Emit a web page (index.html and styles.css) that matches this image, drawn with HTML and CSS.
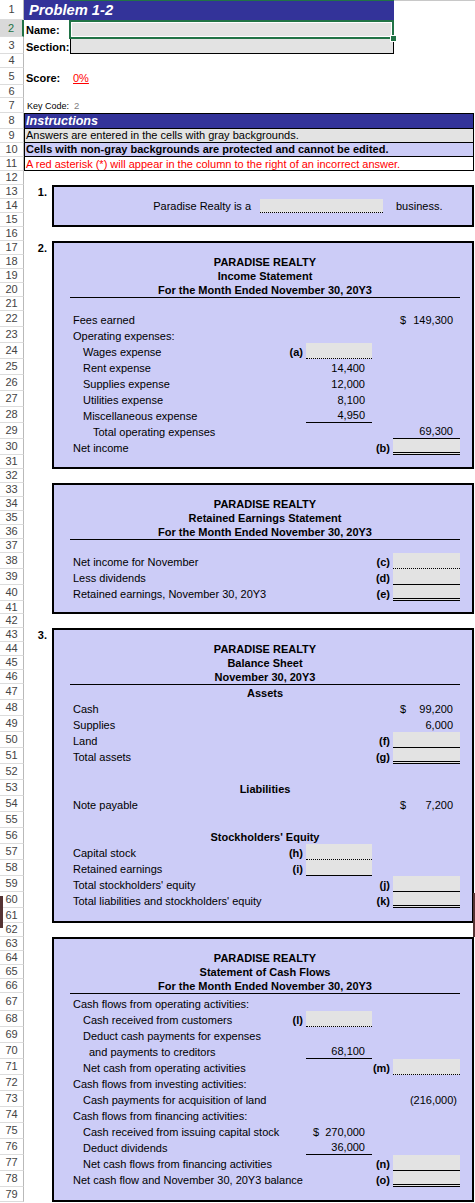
FILE: index.html
```html
<!DOCTYPE html>
<html>
<head>
<meta charset="utf-8">
<link rel="stylesheet" href="styles.css">
</head>
<body>
<div class="sheet">
  <div class="rowhdr">
    <div class="rh h20">1</div><div class="rh h17 on">2</div><div class="rh h17">3</div><div class="rh h14">4</div><div class="rh h17">5</div><div class="rh h13">6</div><div class="rh h15">7</div><div class="rh h16">8</div>
    <div class="rh h14">9</div><div class="rh h14">10</div><div class="rh h14">11</div><div class="rh h14">12</div><div class="rh h14">13</div><div class="rh h14">14</div><div class="rh h14">15</div><div class="rh h14">16</div><div class="rh h14">17</div><div class="rh h14">18</div><div class="rh h14">19</div><div class="rh h14">20</div><div class="rh h14">21</div>
    <div class="rh h16">22</div><div class="rh h16">23</div><div class="rh h16">24</div><div class="rh h16">25</div><div class="rh h16">26</div><div class="rh h16">27</div><div class="rh h16">28</div><div class="rh h16">29</div><div class="rh h16">30</div>
    <div class="rh h14">31</div><div class="rh h14">32</div><div class="rh h14">33</div><div class="rh h14">34</div><div class="rh h14">35</div><div class="rh h14">36</div><div class="rh h14">37</div>
    <div class="rh h16">38</div><div class="rh h16">39</div><div class="rh h16">40</div><div class="rh h13">41</div>
    <div class="rh h14">42</div><div class="rh h14">43</div><div class="rh h14">44</div><div class="rh h14">45</div><div class="rh h14">46</div>
    <div class="rh h16">47</div><div class="rh h16">48</div><div class="rh h16">49</div><div class="rh h16">50</div><div class="rh h16">51</div><div class="rh h16">52</div><div class="rh h16">53</div><div class="rh h16">54</div><div class="rh h16">55</div><div class="rh h16">56</div><div class="rh h16">57</div><div class="rh h16">58</div><div class="rh h16">59</div><div class="rh h16">60</div>
    <div class="rh h15">61</div>
    <div class="rh h14">62</div><div class="rh h14">63</div><div class="rh h14">64</div><div class="rh h14">65</div><div class="rh h14">66</div>
    <div class="rh h18">67</div>
    <div class="rh h16">68</div><div class="rh h16">69</div><div class="rh h16">70</div><div class="rh h16">71</div><div class="rh h16">72</div><div class="rh h16">73</div><div class="rh h16">74</div><div class="rh h16">75</div><div class="rh h16">76</div><div class="rh h16">77</div><div class="rh h16">78</div>
    <div class="rh h15">79</div>
  </div>

  <div class="cells">
    <div class="r h20"><div class="title">Problem 1-2</div></div>
    <div class="r h17"><div class="lab">Name:</div><div class="namebox"></div></div>
    <div class="r h17"><div class="lab">Section:</div><div class="secbox"></div></div>
    <div class="r h14"></div>
    <div class="r h17"><div class="lab">Score:</div><div class="pct">0%</div></div>
    <div class="r h13"></div>
    <div class="r h15"><div class="lab kc">Key Code:</div><div class="kv">2</div></div>

    <div class="instr">
      <div class="ir h16 ib">Instructions</div>
      <div class="ir h14 ig">Answers are entered in the cells with gray backgrounds.</div>
      <div class="ir h14 il">Cells with non-gray backgrounds are protected and cannot be edited.</div>
      <div class="ir h14 iw">A red asterisk (*) will appear in the column to the right of an incorrect answer.</div>
    </div>
    <div class="r h14"></div>

    <!-- 1 -->
    <div class="q">
      <div class="qn">1.</div>
      <div class="box">
        <div class="b1 h14"></div>
        <div class="b1 h14"><div class="c rt">Paradise Realty is a</div><div class="c g ud"></div><div class="c bz">business.</div></div>
        <div class="b1 h14"></div>
      </div>
    </div>
    <div class="r h14"></div>

    <!-- 2 -->
    <div class="q">
      <div class="qn">2.</div>
      <div class="box">
        <div class="sr h14"></div>
        <div class="sr h14"><div class="c hd">PARADISE REALTY</div></div>
        <div class="sr h14"><div class="c hd">Income Statement</div></div>
        <div class="sr h14"><div class="c hd ul">For the Month Ended November 30, 20Y3</div></div>
        <div class="sr h14"></div>
        <div class="sr h16"><div class="c lb"><span>Fees earned</span></div><div class="c a1"></div><div class="c t2"></div><div class="c a2 dl"><span>$</span><span>149,300</span></div></div>
        <div class="sr h16"><div class="c lb"><span>Operating expenses:</span></div><div class="c a1"></div><div class="c t2"></div><div class="c a2"></div></div>
        <div class="sr h16"><div class="c lb"><span class="i1">Wages expense</span><span class="tg">(a)</span></div><div class="c a1 g ud"></div><div class="c t2"></div><div class="c a2"></div></div>
        <div class="sr h16"><div class="c lb"><span class="i1">Rent expense</span></div><div class="c a1">14,400</div><div class="c t2"></div><div class="c a2"></div></div>
        <div class="sr h16"><div class="c lb"><span class="i1">Supplies expense</span></div><div class="c a1">12,000</div><div class="c t2"></div><div class="c a2"></div></div>
        <div class="sr h16"><div class="c lb"><span class="i1">Utilities expense</span></div><div class="c a1">8,100</div><div class="c t2"></div><div class="c a2"></div></div>
        <div class="sr h16"><div class="c lb"><span class="i1">Miscellaneous expense</span></div><div class="c a1 u1">4,950</div><div class="c t2"></div><div class="c a2"></div></div>
        <div class="sr h16"><div class="c lb"><span class="i2">Total operating expenses</span></div><div class="c a1"></div><div class="c t2"></div><div class="c a2 u1">69,300</div></div>
        <div class="sr h16"><div class="c lb"><span>Net income</span></div><div class="c a1"></div><div class="c t2">(b)</div><div class="c a2 g u2"></div></div>
        <div class="sr h14"></div>
      </div>
    </div>
    <div class="r h14"></div>

    <!-- retained earnings -->
    <div class="q">
      <div class="qn"></div>
      <div class="box">
        <div class="sr h14"></div>
        <div class="sr h14"><div class="c hd">PARADISE REALTY</div></div>
        <div class="sr h14"><div class="c hd">Retained Earnings Statement</div></div>
        <div class="sr h14"><div class="c hd ul">For the Month Ended November 30, 20Y3</div></div>
        <div class="sr h14"></div>
        <div class="sr h16"><div class="c lb"><span>Net income for November</span></div><div class="c a1"></div><div class="c t2">(c)</div><div class="c a2 g ud"></div></div>
        <div class="sr h16"><div class="c lb"><span>Less dividends</span></div><div class="c a1"></div><div class="c t2">(d)</div><div class="c a2 g u1"></div></div>
        <div class="sr h16"><div class="c lb"><span>Retained earnings, November 30, 20Y3</span></div><div class="c a1"></div><div class="c t2">(e)</div><div class="c a2 g u2"></div></div>
        <div class="sr h13"></div>
      </div>
    </div>
    <div class="r h14"></div>

    <!-- 3 balance sheet -->
    <div class="q">
      <div class="qn">3.</div>
      <div class="box">
        <div class="sr h14"></div>
        <div class="sr h14"><div class="c hd">PARADISE REALTY</div></div>
        <div class="sr h14"><div class="c hd">Balance Sheet</div></div>
        <div class="sr h14"><div class="c hd ul">November 30, 20Y3</div></div>
        <div class="sr h16"><div class="c hd">Assets</div></div>
        <div class="sr h16"><div class="c lb"><span>Cash</span></div><div class="c a1"></div><div class="c t2"></div><div class="c a2 dl"><span>$</span><span>99,200</span></div></div>
        <div class="sr h16"><div class="c lb"><span>Supplies</span></div><div class="c a1"></div><div class="c t2"></div><div class="c a2">6,000</div></div>
        <div class="sr h16"><div class="c lb"><span>Land</span></div><div class="c a1"></div><div class="c t2">(f)</div><div class="c a2 g u1"></div></div>
        <div class="sr h16"><div class="c lb"><span>Total assets</span></div><div class="c a1"></div><div class="c t2">(g)</div><div class="c a2 g u2"></div></div>
        <div class="sr h16"></div>
        <div class="sr h16"><div class="c hd">Liabilities</div></div>
        <div class="sr h16"><div class="c lb"><span>Note payable</span></div><div class="c a1"></div><div class="c t2"></div><div class="c a2 dl"><span>$</span><span>7,200</span></div></div>
        <div class="sr h16"></div>
        <div class="sr h16"><div class="c hd">Stockholders' Equity</div></div>
        <div class="sr h16"><div class="c lb"><span>Capital stock</span><span class="tg">(h)</span></div><div class="c a1 g ud"></div><div class="c t2"></div><div class="c a2"></div></div>
        <div class="sr h16"><div class="c lb"><span>Retained earnings</span><span class="tg">(i)</span></div><div class="c a1 g u1"></div><div class="c t2"></div><div class="c a2"></div></div>
        <div class="sr h16"><div class="c lb"><span>Total stockholders' equity</span></div><div class="c a1"></div><div class="c t2">(j)</div><div class="c a2 g u1"></div></div>
        <div class="sr h16"><div class="c lb"><span>Total liabilities and stockholders' equity</span></div><div class="c a1"></div><div class="c t2">(k)</div><div class="c a2 g u2"></div></div>
        <div class="sr h15"></div>
      </div>
    </div>
    <div class="r h14"></div>

    <!-- cash flows -->
    <div class="q">
      <div class="qn"></div>
      <div class="box">
        <div class="sr h14"></div>
        <div class="sr h14"><div class="c hd">PARADISE REALTY</div></div>
        <div class="sr h14"><div class="c hd">Statement of Cash Flows</div></div>
        <div class="sr h14"><div class="c hd ul">For the Month Ended November 30, 20Y3</div></div>
        <div class="sr h18"><div class="c lb"><span>Cash flows from operating activities:</span></div><div class="c a1"></div><div class="c t2"></div><div class="c a2"></div></div>
        <div class="sr h16"><div class="c lb"><span class="i1">Cash received from customers</span><span class="tg">(l)</span></div><div class="c a1 g ud"></div><div class="c t2"></div><div class="c a2"></div></div>
        <div class="sr h16"><div class="c lb"><span class="i1">Deduct cash payments for expenses</span></div><div class="c a1"></div><div class="c t2"></div><div class="c a2"></div></div>
        <div class="sr h16"><div class="c lb"><span class="i16">and payments to creditors</span></div><div class="c a1 u1">68,100</div><div class="c t2"></div><div class="c a2"></div></div>
        <div class="sr h16"><div class="c lb"><span class="i1">Net cash from operating activities</span></div><div class="c a1"></div><div class="c t2">(m)</div><div class="c a2 g ud"></div></div>
        <div class="sr h16"><div class="c lb"><span>Cash flows from investing activities:</span></div><div class="c a1"></div><div class="c t2"></div><div class="c a2"></div></div>
        <div class="sr h16"><div class="c lb"><span class="i1">Cash payments for acquisition of land</span></div><div class="c a1"></div><div class="c t2"></div><div class="c a2 neg">(216,000)</div></div>
        <div class="sr h16"><div class="c lb"><span>Cash flows from financing activities:</span></div><div class="c a1"></div><div class="c t2"></div><div class="c a2"></div></div>
        <div class="sr h16"><div class="c lb"><span class="i1">Cash received from issuing capital stock</span></div><div class="c a1">$&nbsp;&nbsp;270,000</div><div class="c t2"></div><div class="c a2"></div></div>
        <div class="sr h16"><div class="c lb"><span class="i1">Deduct dividends</span></div><div class="c a1 u1">36,000</div><div class="c t2"></div><div class="c a2"></div></div>
        <div class="sr h16"><div class="c lb"><span class="i1">Net cash flows from financing activities</span></div><div class="c a1"></div><div class="c t2">(n)</div><div class="c a2 g u1"></div></div>
        <div class="sr h16"><div class="c lb"><span>Net cash flow and November 30, 20Y3 balance</span></div><div class="c a1"></div><div class="c t2">(o)</div><div class="c a2 g u2"></div></div>
        <div class="sr h15"></div>
      </div>
    </div>
  </div>

  <div class="topline"></div>
  <div class="topline2"></div>
  <div class="selbox"><div class="handle"></div></div>
  <div class="edge-l"></div>
  <div class="edge-r"></div>
</div>
</body>
</html>
```

FILE: styles.css
```css
* { box-sizing: border-box; }
html, body { margin: 0; padding: 0; background: #fff; }
body {
  width: 475px;
  height: 1203px;
  overflow: hidden;
  font-family: "Liberation Sans", Arial, sans-serif;
  font-size: 11px;
  color: #000;
}
.sheet { display: flex; position: relative; }

.h13 { height: 13px; } .h14 { height: 14px; } .h15 { height: 15px; }
.h16 { height: 16px; } .h17 { height: 17px; } .h18 { height: 18px; } .h20 { height: 20px; }

/* row headers */
.rowhdr { width: 24px; flex: none; }
.rh {
  display: flex; align-items: center; justify-content: center;
  border-bottom: 1px solid #dcdcdc;
  border-right: 1px solid #b9b9b9;
  color: #444;
  font-size: 11px;
  line-height: 11px;
}
.rh.on { background: #d9d9d9; color: #217346; border-right: 2px solid #217346; }

.cells { width: 451px; flex: none; }
.r { display: flex; align-items: flex-end; line-height: 14px; white-space: nowrap; }

.title {
  width: 370px; height: 20px;
  background: #333399; color: #fff;
  font-weight: bold; font-style: italic; font-size: 14.7px;
  padding-left: 5px;
  display: flex; align-items: center;
}
.lab { width: 46px; padding-left: 2px; font-weight: bold; }
.namebox { width: 324px; height: 100%; background: #e3e3e3; }
.secbox { width: 324px; height: 100%; background: #e3e3e3; border: 1px solid #000; border-top: none; }
.pct { padding-left: 3px; color: #f00; text-decoration: underline; }
.kc { font-weight: normal; font-size: 9px; padding-left: 3px; }
.kv { padding-left: 4px; font-size: 9.5px; color: #7f7f7f; }

/* instructions */
.instr { width: 450px; outline: 1px solid #000; outline-offset: -1px; }
.ir {
  display: flex; align-items: flex-end; line-height: 14px;
  padding-left: 2px; white-space: nowrap;
  border-bottom: 1px solid #000;
}
.ir:last-child { border-bottom: none; }
.ib { background: #333399; color: #fff; font-weight: bold; font-style: italic; font-size: 12.6px; align-items: center; }
.ig { background: #e3e3e3; }
.il { background: #ccccf7; font-weight: bold; }
.iw { color: #f00; }

/* question boxes */
.q { display: flex; align-items: flex-start; }
.qn { width: 28px; flex: none; text-align: right; padding-right: 5px; font-weight: bold; line-height: 14px; }
.box {
  width: 422px; flex: none;
  background: #ccccf7;
  outline: 2px solid #000; outline-offset: -2px;
  padding: 0 14px 0 18px;
}
.b1 { display: grid; grid-template-columns: 190px 123px 77px; }
.sr { display: grid; grid-template-columns: 236px 66px 21px 67px; }
.c { display: flex; align-items: flex-end; line-height: 14px; white-space: nowrap; min-width: 0; }
.rt { justify-content: flex-end; padding-right: 9px; }
.bz { padding-left: 13px; }
.hd { grid-column: 1 / -1; justify-content: center; font-weight: bold; }
.ul { border-bottom: 1px solid #000; }
.lb { justify-content: space-between; padding: 0 3px; }
.i1 { padding-left: 10px; }
.i2 { padding-left: 20px; }
.i16 { padding-left: 16px; }
.tg { font-weight: bold; }
.a1, .a2 { justify-content: flex-end; padding-right: 7px; }
.a2.dl { justify-content: space-between; padding-left: 7px; }
.a2.neg { padding-right: 3px; }
.t2 { justify-content: flex-end; padding-right: 3px; font-weight: bold; overflow: visible; }
.g { background: #e3e3e3; }
.u1 { border-bottom: 1px solid #000; }
.ud { border-bottom: 1px dotted #000; }
.u2 { border-bottom: 3px double #000; }

/* overlays */
.topline { position: absolute; left: 70px; top: 0; width: 324px; height: 1px; background: #217346; }
.topline2 { position: absolute; left: 394px; top: 0; width: 81px; height: 1px; background: #c8c8c8; }
.selbox {
  position: absolute; left: 69px; top: 20px; width: 325px; height: 19px;
  border: 2px solid #217346;
  box-shadow: inset 0 0 0 1px #fff;
}
.handle {
  position: absolute; right: -5px; bottom: -5px; width: 7px; height: 7px;
  background: #217346; border: 1px solid #fff;
}
.edge-l { position: absolute; left: 0; top: 896px; width: 3px; height: 32px; background: #553333; }
.edge-r { position: absolute; left: 473px; top: 893px; width: 2px; height: 44px; background: #553333; }
```
